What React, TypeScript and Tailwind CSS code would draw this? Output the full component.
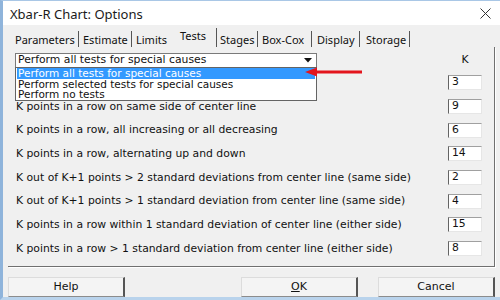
import React from 'react';

const ui = { fontFamily: '"Noto Sans", "Open Sans", sans-serif' };
const dlg = { fontFamily: '"DejaVu Sans", Verdana, sans-serif' };

const tabs = [
    { t: 'Parameters', cls: 'w-[67px] pl-[3px] border-r' },
    { t: 'Estimate', cls: 'w-[53px] pl-[4px] border-r' },
    { t: 'Limits', cls: 'w-[40px] pl-[4px]' },
    { t: 'Tests', cls: 'w-[45px] pl-[8px] border-r', active: true },
    { t: 'Stages', cls: 'w-[41px] pl-[3px] border-r' },
    { t: 'Box-Cox', cls: 'w-[54px] pl-[4px] border-r' },
    { t: 'Display', cls: 'w-[48px] pl-[5px] border-r' },
    { t: 'Storage', cls: 'w-[50px] pl-[6px] border-r' },
];

// first row is covered by the open dropdown list
const rows = [
    { label: '', k: '3' },
    { label: 'K points in a row on same side of center line', k: '9' },
    { label: 'K points in a row, all increasing or all decreasing', k: '6' },
    { label: 'K points in a row, alternating up and down', k: '14' },
    { label: 'K out of K+1 points > 2 standard deviations from center line (same side)', k: '2' },
    { label: 'K out of K+1 points > 1 standard deviation from center line (same side)', k: '4' },
    { label: 'K points in a row within 1 standard deviation of center line (either side)', k: '15' },
    { label: 'K points in a row > 1 standard deviation from center line (either side)', k: '8' },
];

function Button({ children }: { children: React.ReactNode }) {
    return (
        <div
            className="h-[20px] w-[117px] flex items-center justify-center bg-[#f4f4f4] border-t border-l border-[#dcdcdc] border-r-2 border-r-[#555] border-b border-b-[#8c8c8c] text-[11px] text-[#111]"
            style={dlg}
        >
            {children}
        </div>
    );
}

export default function App() {
    return (
        <div className="w-[500px] h-[300px] flex flex-col bg-[#f0f0f0] border-l-[3px] border-l-[#8fb4db] border-t border-t-[#a9c7e6] border-b-[3px] border-b-[#b9d3ec] overflow-hidden">
            {/* title bar */}
            <div className="h-[24px] shrink-0 bg-white flex items-center justify-between pl-[7px] pr-[8px]">
                <span className="text-[13px] text-[#1a1a1a] leading-none pt-[2px]" style={ui}>
                    Xbar-R Chart: Options
                </span>
                <svg width="11" height="11" viewBox="0 0 11 11" className="mr-[1px]">
                    <path d="M0.5 0.5 L10.5 10.5 M10.5 0.5 L0.5 10.5" stroke="#333" strokeWidth="1" />
                </svg>
            </div>

            <div className="flex-1 flex flex-col px-[5px]">
                {/* tabs */}
                <div className="h-[22px] flex items-end pl-[4px] text-[11px] text-[#111]" style={ui}>
                    {tabs.map((tab) =>
                        tab.active ? (
                            <div key={tab.t} className={'h-[19px] flex items-start leading-none border-[#555] ' + tab.cls}>
                                <span className="pt-[2px]">{tab.t}</span>
                            </div>
                        ) : (
                            <div key={tab.t} className={'h-[16px] flex items-center leading-none border-[#555] ' + tab.cls}>
                                {tab.t}
                            </div>
                        )
                    )}
                </div>

                {/* panel */}
                <div className="relative h-[220px] border-r border-r-[#707070] border-b border-b-[#707070] shadow-[1px_1px_0_#fff] text-[10.8px] text-[#111]" style={dlg}>
                    <div className="h-[24px] flex items-start pt-[6px] pl-[7px] pr-[12px]">
                        <div className="w-[302px] h-[15px] bg-white border border-[#7a7a7a] flex items-center justify-between pl-[2px] leading-none">
                            <span>Perform all tests for special causes</span>
                            <div className="w-[17px] h-full flex items-center justify-center">
                                <svg width="8" height="5" viewBox="0 0 8 5">
                                    <path d="M0 0 H8 L4 4.5 Z" fill="#111" />
                                </svg>
                            </div>
                        </div>
                        <div className="ml-auto w-[34px] text-center pt-[2px] leading-none">K</div>
                    </div>

                    <div className="flex flex-col">
                        {rows.map((r, i) => (
                            <div key={i} className="h-[23.7px] flex items-center pl-[8px] pr-[12px]">
                                <span className="leading-[10px]">{r.label}</span>
                                <div className="ml-auto w-[34px] h-[15px] bg-white border-l border-l-[#646464] border-t border-t-[#a0a0a0] border-r border-r-[#e6e6e6] border-b border-b-[#e6e6e6] pl-[3px] leading-[12px]">
                                    {r.k}
                                </div>
                            </div>
                        ))}
                    </div>

                    {/* open dropdown list */}
                    <div className="absolute left-[7px] top-[20px] w-[302px] h-[34px] bg-white border border-[#646464] flex flex-col text-[10.5px] leading-[10.6px]">
                        <div className="bg-[#3399ff] text-white pl-[1px] mx-[1px]">Perform all tests for special causes</div>
                        <div className="pl-[2px]">Perform selected tests for special causes</div>
                        <div className="pl-[2px]">Perform no tests</div>
                    </div>

                    {/* red annotation arrow */}
                    <svg className="absolute left-[297px] top-[20px]" width="60" height="10" viewBox="0 0 60 10">
                        <path d="M0 5 L12 0.5 L12 9.5 Z" fill="#e3151d" />
                        <path d="M10 5 H57" stroke="#e3151d" strokeWidth="3" />
                    </svg>
                </div>

                {/* buttons */}
                <div className="flex items-center justify-between mt-[10px]">
                    <Button>Help</Button>
                    <div className="flex gap-[20px]">
                        <Button>
                            <span className="underline">O</span>K
                        </Button>
                        <Button>Cancel</Button>
                    </div>
                </div>
            </div>
        </div>
    );
}
